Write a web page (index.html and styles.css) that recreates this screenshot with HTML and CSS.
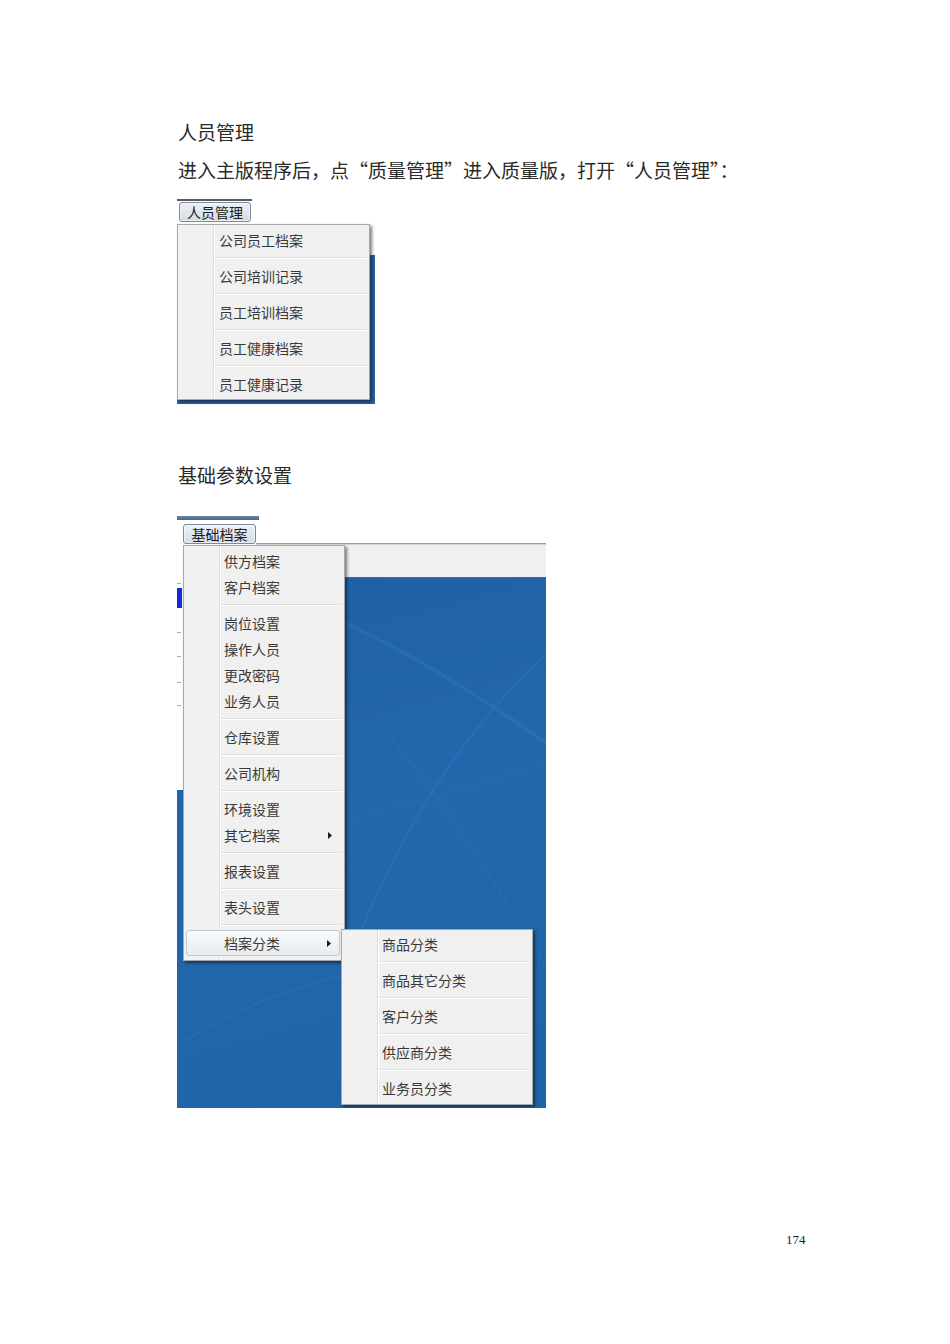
FILE: index.html
```html
<!DOCTYPE html>
<html lang="zh-CN">
<head>
<meta charset="utf-8">
<title>人员管理 / 基础参数设置</title>
<link rel="stylesheet" href="styles.css">
</head>
<body>
<div class="page">
  <h1 class="heading h-first">人员管理</h1>
  <p class="para">进入主版程序后，点“质量管理”进入质量版，打开“人员管理”：</p>

  <div class="shot1">
    <div class="s1-bar"><div class="s1-topline"></div><div class="btn btn1">人员管理</div></div>
    <div class="s1-body">
      <div class="menu menu1">
        <div class="mi">公司员工档案</div>
        <div class="sep"></div>
        <div class="mi">公司培训记录</div>
        <div class="sep"></div>
        <div class="mi">员工培训档案</div>
        <div class="sep"></div>
        <div class="mi">员工健康档案</div>
        <div class="sep"></div>
        <div class="mi">员工健康记录</div>
      </div>
    </div>
  </div>

  <h2 class="heading h-second">基础参数设置</h2>

  <div class="shot2">
    <div class="s2-top"><div class="s2-strip"></div></div>
    <div class="s2-menubar">
      <div class="btn btn2">基础档案</div>
      <div class="s2-line"></div>
    </div>
    <div class="s2-main">
      <div class="s2-left">
        <div class="s2-leftwhite">
          <div class="tick t1"></div>
          <div class="bluebar"></div>
          <div class="tick t2"></div>
          <div class="tick t3"></div>
          <div class="tick t4"></div>
          <div class="tick t5"></div>
        </div>
        <div class="s2-leftblue"></div>
      </div>
      <div class="s2-win">
        <div class="s2-toolbar"></div>
        <div class="s2-desktop">
          <svg class="curves" width="363" height="530" viewBox="0 0 363 530">
            <path d="M150 40 C 220 70, 300 120, 370 170" stroke="#3d83c6" stroke-width="4" fill="none" opacity="0.28"/>
            <path d="M175 360 C 220 250, 280 150, 370 70" stroke="#3d83c6" stroke-width="2.5" fill="none" opacity="0.25"/>
            <path d="M200 150 C 250 210, 310 300, 370 400" stroke="#3d83c6" stroke-width="2" fill="none" opacity="0.18"/>
            <path d="M-10 470 C 50 430, 120 405, 175 395" stroke="#3d83c6" stroke-width="2" fill="none" opacity="0.22"/>
          </svg>
        </div>
      </div>
    </div>

    <div class="menu menu2">
      <div class="mi">供方档案</div>
      <div class="mi">客户档案</div>
      <div class="sep"></div>
      <div class="mi">岗位设置</div>
      <div class="mi">操作人员</div>
      <div class="mi">更改密码</div>
      <div class="mi">业务人员</div>
      <div class="sep"></div>
      <div class="mi">仓库设置</div>
      <div class="sep"></div>
      <div class="mi">公司机构</div>
      <div class="sep"></div>
      <div class="mi">环境设置</div>
      <div class="mi has-sub"><span>其它档案</span><svg class="arrow" width="4" height="7" viewBox="0 0 4 7"><path d="M0 0L4 3.5L0 7Z" fill="#1a1a1a"/></svg></div>
      <div class="sep"></div>
      <div class="mi">报表设置</div>
      <div class="sep"></div>
      <div class="mi">表头设置</div>
      <div class="sep"></div>
      <div class="mi has-sub active"><span>档案分类</span><svg class="arrow" width="4" height="7" viewBox="0 0 4 7"><path d="M0 0L4 3.5L0 7Z" fill="#1a1a1a"/></svg></div>
    </div>

    <div class="menu menu3">
      <div class="mi">商品分类</div>
      <div class="sep"></div>
      <div class="mi">商品其它分类</div>
      <div class="sep"></div>
      <div class="mi">客户分类</div>
      <div class="sep"></div>
      <div class="mi">供应商分类</div>
      <div class="sep"></div>
      <div class="mi">业务员分类</div>
    </div>
  </div>

  <div class="pagenum">174</div>
</div>
</body>
</html>
```

FILE: styles.css
```css
html, body {
  margin: 0;
  padding: 0;
  background: #ffffff;
}

.page {
  width: 950px;
  height: 1344px;
  box-sizing: border-box;
  padding: 120px 0 0 177px;
  font-family: "Noto Sans CJK SC", "Liberation Serif", sans-serif;
  color: #2a2a2a;
}

.heading {
  margin: 0 0 0 1px;
  font-size: 19px;
  line-height: 24px;
  font-weight: 400;
}

.para {
  margin: 14px 0 0 1px;
  font-size: 19px;
  line-height: 24px;
}

.h-second {
  margin-top: 59px;
}

/* ---------- shared menu bits ---------- */
.btn {
  box-sizing: border-box;
  height: 20px;
  border: 1px solid #7b8898;
  border-radius: 3px;
  background: linear-gradient(#edf1f5, #d3dbe4);
  box-shadow: inset 0 0 0 1px rgba(255,255,255,0.55);
  font-size: 14px;
  line-height: 18px;
  color: #1c1c1c;
  text-align: center;
}

.menu {
  box-sizing: border-box;
  border: 1px solid #a9a9a9;
  background:
    linear-gradient(to right, #f1f1f1 0 35px, #dcdddd 35px 36px, #ffffff 36px 37px, #f0f0f0 37px);
  box-shadow: 2px 2px 3px rgba(0,0,0,0.5);
  font-size: 14px;
  color: #3a3a3a;
}

.mi {
  box-sizing: border-box;
  height: 26px;
  line-height: 26px;
  padding-left: 40px;
  display: flex;
  align-items: center;
  justify-content: space-between;
  padding-right: 12px;
  white-space: nowrap;
}

.sep {
  height: 10px;
  margin: 0 2px 0 37px;
  background: linear-gradient(transparent 0 4px, #e0e0e0 4px 5px, #ffffff 5px 6px, transparent 6px);
}

.arrow {
  display: block;
}

/* ---------- screenshot 1 ---------- */
.shot1 {
  margin-top: 17px;
  width: 198px;
}

.s1-bar {
  height: 25px;
}

.s1-topline {
  width: 75px;
  height: 2px;
  background: #5a5a5a;
}

.btn1 {
  width: 72px;
  margin: 1px 0 0 2px;
}

.s1-body {
  padding: 0 5px 4px 0;
  background: linear-gradient(#ffffff 0 31px, #2b62a1 31px);
}

.menu1 {
  width: 193px;
  padding: 2px 0;
}

.menu1 .mi {
  padding-left: 41px;
}

/* ---------- screenshot 2 ---------- */
.shot2 {
  position: relative;
  margin-top: 29px;
  width: 369px;
  height: 592px;
  display: flex;
  flex-direction: column;
  overflow: hidden;
}

.s2-top {
  height: 4px;
  flex: none;
}

.s2-strip {
  width: 82px;
  height: 4px;
  background: linear-gradient(#6a86a3, #45658a);
}

.s2-menubar {
  height: 25px;
  flex: none;
  display: flex;
  background: #ffffff;
}

.btn2 {
  width: 73px;
  margin: 4px 0 0 6px;
}

.s2-line {
  flex: 1;
  align-self: flex-end;
  height: 2px;
  background: linear-gradient(#9c9c9c 0 1px, #d4d4d4 1px);
}

.s2-main {
  height: 563px;
  flex: none;
  display: flex;
}

.s2-left {
  width: 6px;
  display: flex;
  flex-direction: column;
}

.s2-leftwhite {
  height: 245px;
  flex: none;
  background: #ffffff;
  display: flex;
  flex-direction: column;
}

.tick {
  width: 4px;
  height: 1px;
  background: #a8a8a8;
}

.t1 { margin-top: 38px; }
.t2 { margin-top: 24px; }
.t3 { margin-top: 23px; }
.t4 { margin-top: 25px; }
.t5 { margin-top: 22px; }

.bluebar {
  margin-top: 4px;
  width: 5px;
  height: 20px;
  background: #1428e0;
}

.s2-leftblue {
  flex: 1;
  background: #2064a9;
}

.s2-win {
  flex: 1;
  display: flex;
  flex-direction: column;
}

.s2-toolbar {
  height: 32px;
  flex: none;
  background: #f0f0f0;
  border-bottom: 1px solid #4f6a88;
}

.s2-desktop {
  height: 530px;
  flex: none;
  background: linear-gradient(165deg, #1e60a5 0%, #2367ad 45%, #1f63a8 100%);
  overflow: hidden;
}

.curves {
  display: block;
}

.menu2 {
  position: absolute;
  left: 6px;
  top: 29px;
  width: 162px;
  padding: 2px 0 4px;
}

.menu2 .mi.active {
  margin: 0 4px 0 2px;
  padding-left: 37px;
  padding-right: 8px;
  border: 1px solid #c3cad4;
  border-radius: 3px;
  background: linear-gradient(#fafbfc, #e7ebef);
}

.menu3 {
  position: absolute;
  left: 164px;
  top: 413px;
  width: 192px;
  padding: 1px 0 3px;
  z-index: 2;
}

/* ---------- page number ---------- */
.pagenum {
  margin: 124px 0 0 609px;
  font-family: "Liberation Serif", serif;
  font-size: 13px;
  line-height: 16px;
  color: #222;
}
```
